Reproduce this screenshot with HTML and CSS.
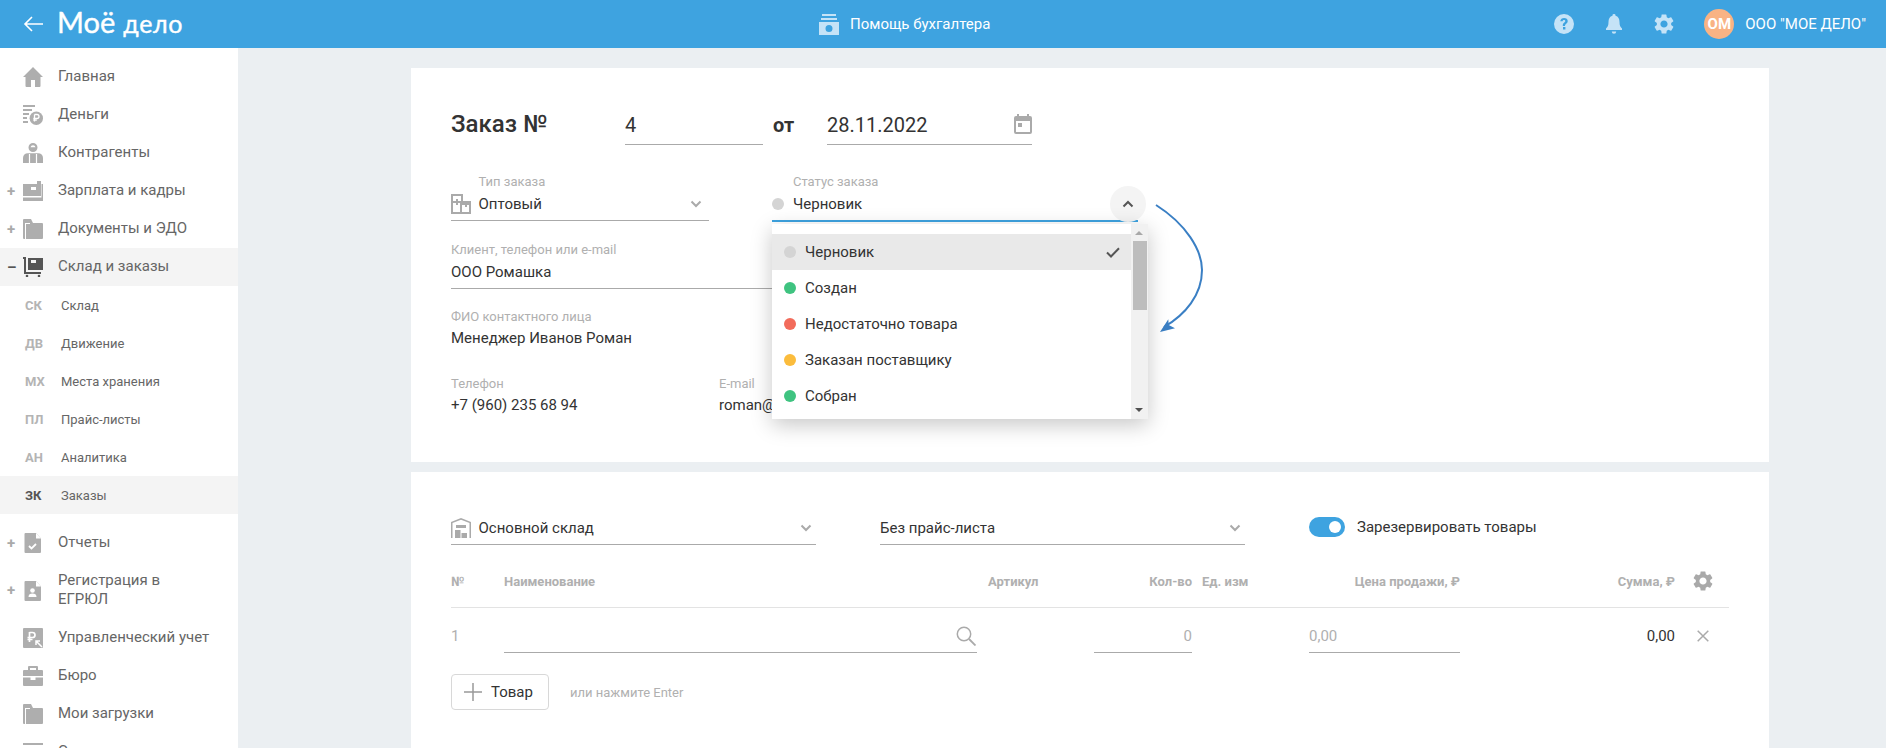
FILE: index.html
```html
<!DOCTYPE html>
<html lang="ru">
<head>
<meta charset="utf-8">
<title>Заказ</title>
<link rel="stylesheet" href="styles.css">
</head>
<body>
<svg class="defs" xmlns="http://www.w3.org/2000/svg">
  <symbol id="i-gear" viewBox="2.4 2 19.2 20"><path d="M19.14 12.94c.04-.3.06-.61.06-.94 0-.32-.02-.64-.07-.94l2.03-1.58a.49.49 0 0 0 .12-.61l-1.92-3.32a.488.488 0 0 0-.59-.22l-2.39.96c-.5-.38-1.03-.7-1.62-.94l-.36-2.54a.484.484 0 0 0-.48-.41h-3.84c-.24 0-.43.17-.47.41l-.36 2.54c-.59.24-1.13.57-1.62.94l-2.39-.96c-.22-.08-.47 0-.59.22L2.74 8.87c-.12.21-.08.47.12.61l2.03 1.58c-.05.3-.09.63-.09.94s.02.64.07.94l-2.03 1.58a.49.49 0 0 0-.12.61l1.92 3.32c.12.22.37.29.59.22l2.39-.96c.5.38 1.03.7 1.62.94l.36 2.54c.05.24.24.41.48.41h3.84c.24 0 .44-.17.47-.41l.36-2.54c.59-.24 1.13-.56 1.62-.94l2.39.96c.22.08.47 0 .59-.22l1.92-3.32c.12-.22.07-.47-.12-.61l-2.01-1.58zM12 15.6c-1.98 0-3.6-1.62-3.6-3.6s1.62-3.6 3.6-3.6 3.6 1.62 3.6 3.6-1.62 3.6-3.6 3.6z"/></symbol>
  <symbol id="i-chev" viewBox="0 0 12 8"><path d="M1.5 1.5 6 6l4.5-4.5" fill="none" stroke="currentColor" stroke-width="2"/></symbol>
  <symbol id="i-folder" viewBox="0 0 20 20"><path d="M1 0h7l2 4h9a1 1 0 0 1 1 1v14a1 1 0 0 1-1 1H1a1 1 0 0 1-1-1V1a1 1 0 0 1 1-1z"/><path d="M3 20V5h4V4H2v16z" fill="#fff"/></symbol>
</svg>

<header class="topbar">
  <div class="topbar-left">
    <svg class="back" viewBox="0 0 20 16"><path d="M20 8H2M9 1 2 8l7 7" fill="none" stroke="#fff" stroke-width="1.6"/></svg>
    <span class="logo"><span class="logo-a">Моё</span> <span class="logo-b">дело</span></span>
  </div>
  <div class="topbar-help">
    <svg class="ic-help" viewBox="0 0 20 21"><path d="M3 0h14v2H3zM2 4h16v2H2z"/><path fill-rule="evenodd" d="M0 8h20v13H0zM10 11a3.5 3.5 0 1 0 0 7 3.5 3.5 0 0 0 0-7z"/></svg>
    <span>Помощь бухгалтера</span>
  </div>
  <div class="topbar-right">
    <svg class="tb-ic" viewBox="0 0 20 20"><path fill-rule="evenodd" d="M10 0a10 10 0 1 1 0 20 10 10 0 0 1 0-20zM9 13v2.4h2.4V13zm1.1-9C8 4 6.500 5.200 6.300 7.300h2.300c.1-.9.600-1.300 1.400-1.300s1.300.4 1.300 1.100c0 .6-.3 1-1 1.500-1.200.9-1.500 1.600-1.500 3.400h2.200c0-1.100.2-1.500 1-2.100 1-.8 1.700-1.600 1.700-2.900C13.700 5.200 12.300 4 10.100 4z"/></svg>
    <svg class="tb-ic bell" viewBox="0 0 16 20"><path d="M8 0a1.500 1.500 0 0 1 1.500 1.700C12.300 2.400 13.500 4.700 13.500 8c0 3.500.8 5 2.500 6.500V16H0v-1.500C1.700 13 2.500 11.500 2.500 8c0-3.300 1.200-5.600 4-6.300A1.500 1.500 0 0 1 8 0zM5.800 17.500h4.400a2.200 2.200 0 0 1-4.400 0z"/></svg>
    <svg class="tb-ic tb-gear"><use href="#i-gear"/></svg>
    <span class="avatar">ОМ</span>
    <span class="company">ООО "МОЕ ДЕЛО"</span>
  </div>
</header>

<div class="layout">
  <nav class="sidebar">
    <a class="nav-item"><span class="nav-sign"></span>
      <svg class="nav-ic" viewBox="0 0 20 20"><path d="M10 0l10 10h-2.500v9a1 1 0 0 1-1 1H12v-7H8v7H3.500a1 1 0 0 1-1-1v-9H0z"/></svg>
      <span>Главная</span></a>
    <a class="nav-item"><span class="nav-sign"></span>
      <svg class="nav-ic" viewBox="0 0 20 20"><path d="M0 0h12v2H0zM0 4h9v2H0zM0 8h6v2H0zM0 12h4v2H0zM0 16h5v2H0z"/><circle cx="13.300" cy="13.300" r="6.700"/><path d="M11.500 9.500h2.500a2 2 0 0 1 0 4h-2.500M10.300 13.500h3M10.300 15.200h3.500M11.500 9.500v7" fill="none" stroke="#fff" stroke-width="1.300"/></svg>
      <span>Деньги</span></a>
    <a class="nav-item"><span class="nav-sign"></span>
      <svg class="nav-ic" viewBox="0 0 20 20"><path fill-rule="evenodd" d="M10 0a4.500 4.500 0 1 1 0 9 4.500 4.500 0 0 1 0-9zm0 2.200a2.600 2.600 0 0 0-2.500 2h5a2.600 2.600 0 0 0-2.500-2z"/><path d="M0 20v-5c0-3 2-4.800 5-4.800h10c3 0 5 1.800 5 4.800v5z"/><path d="M6.500 11v9M13.500 11v9" stroke="#fff" stroke-width="1.200"/></svg>
      <span>Контрагенты</span></a>
    <a class="nav-item"><span class="nav-sign">+</span>
      <svg class="nav-ic" viewBox="0 0 20 20"><path fill-rule="evenodd" d="M0 3h14V0h4v15H0zM8 6v3h5V6z"/><path d="M0 16.500h18.500V3H20v17H0z"/></svg>
      <span>Зарплата и кадры</span></a>
    <a class="nav-item"><span class="nav-sign">+</span>
      <svg class="nav-ic"><use href="#i-folder"/></svg>
      <span>Документы и ЭДО</span></a>
    <a class="nav-item is-open"><span class="nav-sign">–</span>
      <svg class="nav-ic" viewBox="0 0 20 20"><path d="M0 0h3v15H18v2H1V2H0z"/><path d="M5 1h15v12H5z"/><path d="M8 3h5v3H8z" fill="#f4f4f4"/><circle cx="4" cy="19" r="1.300"/><circle cx="16" cy="19" r="1.300"/></svg>
      <span>Склад и заказы</span></a>
    <div class="subnav">
      <a class="sub-item"><b>СК</b><span>Склад</span></a>
      <a class="sub-item"><b>ДВ</b><span>Движение</span></a>
      <a class="sub-item"><b>МХ</b><span>Места хранения</span></a>
      <a class="sub-item"><b>ПЛ</b><span>Прайс-листы</span></a>
      <a class="sub-item"><b>АН</b><span>Аналитика</span></a>
      <a class="sub-item is-active"><b>ЗК</b><span>Заказы</span></a>
    </div>
    <a class="nav-item nav-after"><span class="nav-sign">+</span>
      <svg class="nav-ic" viewBox="0 0 20 20"><path d="M2.500 0H13l5 5.500V19a1 1 0 0 1-1 1H2.500a1 1 0 0 1-1-1V1a1 1 0 0 1 1-1z"/><path d="M6 13l2.500 2.500L13 11" fill="none" stroke="#fff" stroke-width="1.800"/><path d="M13 0v5.500h5z" fill="#fff"/></svg>
      <span>Отчеты</span></a>
    <a class="nav-item nav-tall"><span class="nav-sign">+</span>
      <svg class="nav-ic" viewBox="0 0 20 20"><path d="M2.500 0H13l5 5.500V19a1 1 0 0 1-1 1H2.500a1 1 0 0 1-1-1V1a1 1 0 0 1 1-1z"/><path d="M13 0v5.500h5z" fill="#fff"/><circle cx="9.500" cy="9.500" r="2.300" fill="#fff"/><path d="M5.500 16c0-2.500 1.500-3.500 4-3.500s4 1 4 3.500z" fill="#fff"/></svg>
      <span>Регистрация в ЕГРЮЛ</span></a>
    <a class="nav-item"><span class="nav-sign"></span>
      <svg class="nav-ic" viewBox="0 0 20 20"><path d="M1 0h18a1 1 0 0 1 1 1v18a1 1 0 0 1-1 1H1a1 1 0 0 1-1-1V1a1 1 0 0 1 1-1z"/><path d="M6.500 4v10M6.500 4.500h3a2.500 2.500 0 0 1 0 5h-5M4.500 11.500h5" fill="none" stroke="#fff" stroke-width="1.700"/><path d="M19 19l-6-6M13 17v-4h4" fill="none" stroke="#fff" stroke-width="1.500"/></svg>
      <span>Управленческий учет</span></a>
    <a class="nav-item"><span class="nav-sign"></span>
      <svg class="nav-ic" viewBox="0 0 20 20"><path d="M6 0h8a1 1 0 0 1 1 1v3h4a1 1 0 0 1 1 1v5H0V5a1 1 0 0 1 1-1h4V1a1 1 0 0 1 1-1zm1 2v2h6V2zM0 11.500h7.500V14h5v-2.500H20V19a1 1 0 0 1-1 1H1a1 1 0 0 1-1-1z"/></svg>
      <span>Бюро</span></a>
    <a class="nav-item"><span class="nav-sign"></span>
      <svg class="nav-ic"><use href="#i-folder"/></svg>
      <span>Мои загрузки</span></a>
    <a class="nav-item"><span class="nav-sign"></span>
      <svg class="nav-ic" viewBox="0 0 20 20"><path d="M0 1h20v2H0zM0 6h20v2H0zM0 11h20v2H0z"/></svg>
      <span>Сервисы</span></a>
  </nav>

  <main class="content">
    <section class="card card-order">
      <div class="order-head">
        <h1 class="order-title">Заказ №</h1>
        <div class="head-input head-num">4</div>
        <span class="order-from">от</span>
        <div class="head-input head-date">
          <span>28.11.2022</span>
          <svg class="cal" viewBox="0 0 18 20"><path fill-rule="evenodd" d="M3 0h2v2h8V0h2v2h1a2 2 0 0 1 2 2v14a2 2 0 0 1-2 2H2a2 2 0 0 1-2-2V4a2 2 0 0 1 2-2h1zM2 7v11h14V7zm2 2h4v4H4z"/></svg>
        </div>
      </div>

      <div class="order-fields">
        <div class="field-row">
          <div class="field field-type">
            <svg class="field-ic" viewBox="0 0 20 20"><path fill-rule="evenodd" d="M0 0h12v7h8v13H0zM2 2v5h3V5h2v2h3V2zM2 9v9h7v-9H7v2H5V9zm9 2v7h7v-7h-2v2h-2v-2z"/></svg>
            <div class="field-body"><label>Тип заказа</label><div class="field-value">Оптовый</div></div>
            <svg class="chev"><use href="#i-chev"/></svg>
          </div>
          <div class="field field-status">
            <span class="dot dot-grey"></span>
            <div class="field-body"><label>Статус заказа</label><div class="field-value">Черновик</div></div>
            <span class="round-btn"><svg class="chev-up"><use href="#i-chev"/></svg></span>
            <div class="dropdown">
              <ul class="dd-list">
                <li class="dd-item is-current"><span class="dot dot-grey"></span>Черновик
                  <svg class="check" viewBox="0 0 14 11"><path d="M1 5.500 5 9.500 13 1.200" fill="none" stroke="#555" stroke-width="2"/></svg></li>
                <li class="dd-item"><span class="dot dot-green"></span>Создан</li>
                <li class="dd-item"><span class="dot dot-red"></span>Недостаточно товара</li>
                <li class="dd-item"><span class="dot dot-yellow"></span>Заказан поставщику</li>
                <li class="dd-item"><span class="dot dot-green"></span>Собран</li>
              </ul>
              <div class="dd-scroll"><i class="sb-up"></i><i class="sb-thumb"></i><i class="sb-down"></i></div>
            </div>
          </div>
        </div>
        <div class="field field-client">
          <div class="field-body"><label>Клиент, телефон или e-mail</label><div class="field-value">ООО Ромашка</div></div>
        </div>
        <div class="field field-plain">
          <div class="field-body"><label>ФИО контактного лица</label><div class="field-value">Менеджер Иванов Роман</div></div>
        </div>
        <div class="field-row">
          <div class="field field-plain field-phone">
            <div class="field-body"><label>Телефон</label><div class="field-value">+7 (960) 235 68 94</div></div>
          </div>
          <div class="field field-plain">
            <div class="field-body"><label>E-mail</label><div class="field-value">roman@</div></div>
          </div>
        </div>
      </div>
      <svg class="curve" viewBox="0 0 60 140"><path d="M6 5C36 24 52 50 52 70 52 95 35 115 14 127" fill="none" stroke="#3a7fc4" stroke-width="2"/><path d="M10 132 18.300 119.300 18.700 125 25 128.300z" fill="#3a7fc4"/></svg>
    </section>

    <section class="card card-goods">
      <div class="goods-top">
        <div class="select">
          <svg class="field-ic" viewBox="0 0 20 20"><path d="M10 0 20 4v16h-1.500V5L10 1.700 1.500 5v15H0V4z"/><path d="M5 7h10v3H5zM4 12h5.500v8H4zM10.500 15H16v5h-5.500zM4 15h5.500v5H4z"/></svg>
          <span class="select-text">Основной склад</span>
          <svg class="chev"><use href="#i-chev"/></svg>
        </div>
        <div class="select">
          <span class="select-text">Без прайс-листа</span>
          <svg class="chev"><use href="#i-chev"/></svg>
        </div>
        <div class="reserve">
          <span class="switch"><i></i></span>
          <span>Зарезервировать товары</span>
        </div>
      </div>

      <div class="grid-row grid-head">
        <span>№</span>
        <span>Наименование</span>
        <span class="c-art">Артикул</span>
        <span class="c-right">Кол-во</span>
        <span class="c-unit">Ед. изм</span>
        <span class="c-right">Цена продажи, ₽</span>
        <span class="c-right">Сумма, ₽</span>
        <span class="c-gear"><svg class="gear"><use href="#i-gear"/></svg></span>
      </div>
      <div class="grid-row grid-body">
        <span class="cell muted">1</span>
        <span class="cell cell-input cell-name"><svg class="search" viewBox="0 0 20 20"><circle cx="8" cy="8" r="6.700" fill="none" stroke="#aaa" stroke-width="1.500"/><path d="M13 13l6.500 6.500" stroke="#aaa" stroke-width="1.800"/></svg></span>
        <span class="cell"></span>
        <span class="cell cell-input c-right muted">0</span>
        <span class="cell"></span>
        <span class="cell cell-input muted">0,00</span>
        <span class="cell c-right">0,00</span>
        <span class="cell c-x"><svg class="close" viewBox="0 0 12 12"><path d="M.7.7l10.600 10.600M11.300.7.700 11.300" stroke="#aaa" stroke-width="1.500"/></svg></span>
      </div>
      <div class="add-row">
        <button class="add-btn"><svg class="plus" viewBox="0 0 18 18"><path d="M9 0v18M0 9h18" stroke="#999" stroke-width="1.500"/></svg>Товар</button>
        <span class="add-hint">или нажмите Enter</span>
      </div>
    </section>
  </main>
</div>
</body>
</html>
```
FILE: styles.css
```css
* { box-sizing: border-box; }
html, body { margin: 0; height: 100%; }
body {
  height: 748px;
  overflow: hidden;
  font-family: Roboto, "Liberation Sans", sans-serif;
  color: #333;
  background: #ebeff2;
}
.defs { display: none; }
ul { list-style: none; margin: 0; padding: 0; }

/* top bar */
.topbar {
  height: 48px;
  background: #3ea3e0;
  color: #fff;
  display: flex;
  align-items: center;
}
.topbar-left {
  width: 819px;
  display: flex;
  align-items: center;
  padding-left: 23px;
}
.back { width: 20px; height: 16px; }
.logo {
  margin-left: 14px;
  font-family: Lato, sans-serif;
  font-weight: 400;
  white-space: nowrap;
  line-height: 48px;
  -webkit-text-stroke: .4px #fff;
}
.logo-a { font-size: 29px; }
.logo-b { font-size: 25px; margin-left: 4px; letter-spacing: .6px; }
.topbar-help {
  flex: 1;
  display: flex;
  align-items: center;
  font-size: 15px;
  font-weight: 400;
}
.ic-help { width: 20px; height: 21px; fill: #c5e3f7; margin-right: 11px; }
.topbar-right {
  display: flex;
  align-items: center;
  padding-right: 20px;
}
.tb-ic { width: 20px; height: 20px; fill: #c5e3f7; margin-right: 32px; }
.tb-ic.bell { width: 16px; margin-right: 32px; }
.tb-ic.tb-gear { margin-right: 30px; }
.avatar {
  width: 30px;
  height: 30px;
  border-radius: 50%;
  background: #f9b384;
  font-size: 15px;
  font-weight: 700;
  display: flex;
  align-items: center;
  justify-content: center;
  margin-right: 11px;
}
.company { font-size: 15px; }

/* layout */
.layout { display: flex; height: 700px; }
.sidebar {
  width: 238px;
  flex: none;
  background: #fff;
  padding-top: 10px;
  overflow: hidden;
  font-size: 15px;
  color: #666;
}
.nav-item {
  height: 38px;
  display: flex;
  align-items: center;
  line-height: 19px;
}
.nav-item > span:last-child { padding-bottom: 2px; }
.nav-sign {
  width: 23px;
  padding-left: 7px;
  color: #aaa;
  font-weight: 700;
  font-size: 15px;
  flex: none;
}
.nav-ic { width: 20px; height: 20px; fill: #aeaeae; flex: none; margin-right: 15px; }
.is-open { background: #f4f4f4; }
.is-open .nav-ic { fill: #555; }
.is-open .nav-sign { color: #555; }
.nav-after { margin-top: 10px; }
.nav-tall { height: 57px; }
.nav-tall > span:last-child { width: 150px; }
.sub-item {
  height: 38px;
  display: flex;
  align-items: center;
  padding-left: 25px;
  font-size: 13px;
}
.sub-item b { width: 36px; color: #b4b4b4; font-weight: 700; flex: none; }
.sub-item.is-active { background: #f4f4f4; }
.sub-item.is-active b { color: #555; }

/* cards */
.content { flex: 1; padding: 20px 0 0 173px; overflow: hidden; }
.card { width: 1358px; background: #fff; padding-left: 40px; padding-right: 40px; }
.card-order { height: 394px; position: relative; padding-top: 37px; margin-bottom: 10px; }
.card-goods { height: 400px; padding-top: 25px; }

.order-head { display: flex; align-items: stretch; height: 40px; }
.order-title {
  margin: 0;
  width: 174px;
  font-size: 24px;
  font-weight: 500;
  line-height: 38px;
  color: #333;
}
.head-input {
  border-bottom: 1px solid #aaa;
  font-size: 20px;
  line-height: 40px;
  display: flex;
  align-items: center;
  justify-content: space-between;
}
.head-num { width: 138px; }
.order-from { width: 64px; padding-left: 10px; font-size: 20px; font-weight: 700; line-height: 40px; }
.head-date { width: 205px; }
.cal { width: 18px; height: 20px; fill: #aaa; margin-top: -2px; }

.order-fields { display: flex; flex-direction: column; gap: 19px; margin-top: 28px; }
.field-row { display: flex; }
.field {
  height: 48px;
  display: flex;
  align-items: flex-start;
  border-bottom: 1px solid #aaa;
  position: relative;
}
.field-type { width: 258px; margin-right: 63px; }
.field-status { width: 366px; height: 49px; border-bottom: 2px solid #3ea3e0; }
.field-client { width: 687px; }
.field-plain { border-bottom: 0; }
.field-plain .field-value { margin-top: 0; }
.field-phone { width: 268px; }
.field-body { flex: 1; }
.field-body label { display: block; font-size: 13px; line-height: 18px; color: #b0b0b0; }
.field-value { margin-top: 1px; font-size: 15px; line-height: 24px; color: #333; }
.field-ic { width: 20px; height: 20px; fill: #aaa; flex: none; margin-right: 8px; }
.field-type .field-ic { margin-top: 21px; margin-right: 7.500px; }
.chev { width: 12px; height: 8px; color: #aaa; flex: none; }
.field-type .chev { margin: 27px 7px 0 0; }
.dot { width: 12px; height: 12px; border-radius: 50%; flex: none; }
.dot-grey { background: #d4d4d4; }
.dot-green { background: #3fc380; }
.dot-red { background: #f26b5b; }
.dot-yellow { background: #fbbc3c; }
.field-status > .dot { margin: 25px 9px 0 0; }
.round-btn {
  position: absolute;
  right: -8px;
  top: 13px;
  width: 36px;
  height: 36px;
  border-radius: 50%;
  background: #f4f4f4;
  display: flex;
  align-items: center;
  justify-content: center;
}
.chev-up { width: 12px; height: 8px; color: #555; transform: rotate(180deg); }
.dropdown {
  position: absolute;
  left: 0;
  top: 51px;
  width: 376px;
  height: 195px;
  background: #fff;
  box-shadow: 0 6px 20px rgba(0, 0, 0, .22);
  display: flex;
  z-index: 2;
}
.dd-list { flex: 1; padding-top: 10px; }
.dd-item {
  height: 36px;
  display: flex;
  align-items: center;
  padding: 0 11px 0 12px;
  font-size: 15px;
  color: #333;
}
.dd-item .dot { margin-right: 9px; }
.dd-item.is-current { background: #e9e9e9; }
.check { width: 14px; height: 11px; margin-left: auto; }
.dd-scroll {
  width: 17px;
  flex: none;
  background: #f1f1f1;
  position: relative;
}
.sb-thumb { position: absolute; left: 2px; right: 1px; top: 17px; height: 69px; background: #bdbdbd; }
.sb-up, .sb-down {
  position: absolute;
  left: 4px;
  width: 0;
  height: 0;
  border-left: 4px solid transparent;
  border-right: 4px solid transparent;
}
.sb-up { top: 7px; border-bottom: 4px solid #a8a8a8; }
.sb-down { bottom: 7px; border-top: 4px solid #505050; }
.curve { position: absolute; left: 739px; top: 132px; width: 60px; height: 140px; }

/* goods */
.goods-top { display: flex; height: 48px; }
.select {
  width: 365px;
  height: 48px;
  margin-right: 64px;
  border-bottom: 1px solid #aaa;
  display: flex;
  align-items: center;
  padding-top: 14px;
  font-size: 15px;
}
.select-text { flex: 1; }
.select .field-ic { margin-right: 7.500px; }
.select .chev { margin-right: 4px; }
.reserve { display: flex; align-items: center; gap: 12px; padding-top: 13px; height: 46px; font-size: 15px; }
.switch { width: 36px; height: 20px; border-radius: 10px; background: #3ea3e0; position: relative; flex: none; }
.switch i { position: absolute; right: 4px; top: 4px; width: 12px; height: 12px; border-radius: 50%; background: #fff; }

.grid-row {
  display: grid;
  grid-template-columns: 53px 473px 117px 98px 117px 151px 215px 54px;
}
.grid-head {
  margin-top: 16px;
  height: 47px;
  padding-bottom: 6px;
  border-bottom: 1px solid #e3e3e3;
  align-items: center;
  font-size: 13px;
  font-weight: 700;
  color: #b0b0b0;
}
.c-art { padding-left: 11px; }
.c-unit { padding-left: 10px; }
.c-right { text-align: right; }
.c-gear { display: flex; padding-left: 18px; }
.gear { width: 20px; height: 20px; fill: #a9a9a9; }
.grid-body { height: 45px; }
.cell { padding-top: 16px; line-height: 24px; height: 45px; font-size: 15px; color: #333; }
.cell.muted { color: #b0b0b0; }
.cell-input { border-bottom: 1px solid #aaa; padding-bottom: 4px; }
.cell-name { display: flex; justify-content: flex-end; padding-top: 19px; }
.search { width: 20px; height: 20px; margin-right: 1px; margin-top: -1px; }
.c-x { padding-left: 22px; padding-top: 22px; line-height: 0; }
.close { width: 12px; height: 12px; }

.add-row { display: flex; align-items: center; margin-top: 21px; }
.add-btn {
  width: 98px;
  height: 36px;
  border: 1px solid #d8d8d8;
  border-radius: 4px;
  background: #fff;
  display: flex;
  align-items: center;
  padding: 0 0 0 12px;
  font-family: Roboto, sans-serif;
  font-size: 15px;
  color: #333;
}
.plus { width: 18px; height: 18px; margin-right: 9px; }
.add-hint { margin-left: 21px; font-size: 13px; color: #b0b0b0; }
```
